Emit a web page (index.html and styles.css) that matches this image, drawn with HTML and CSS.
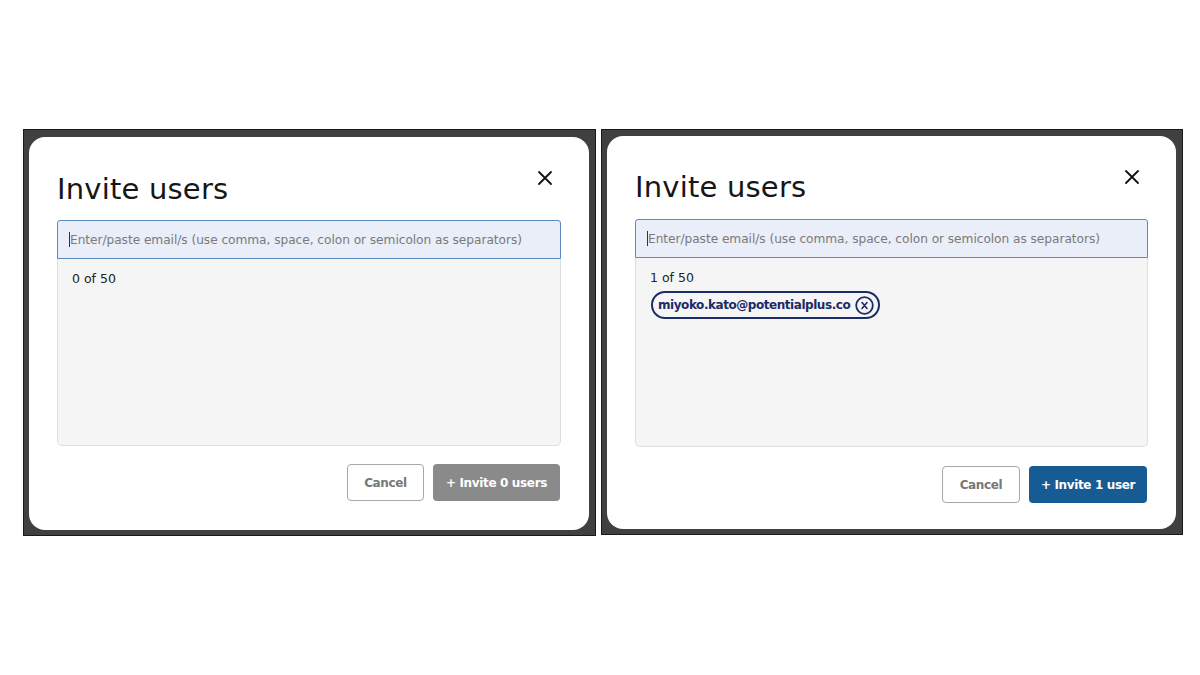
FILE: index.html
```html
<!DOCTYPE html>
<html>
<head>
<meta charset="utf-8">
<link rel="stylesheet" href="styles.css">
</head>
<body>
<div class="stage">
  <div class="frame frame-left">
    <div class="dialog">
      <div class="head">
        <h1 class="title">Invite users</h1>
        <button class="close" aria-label="Close">
          <svg width="16" height="16" viewBox="0 0 16 16"><path d="M2 2L14 14M14 2L2 14" stroke="#111" stroke-width="1.8" stroke-linecap="round"/></svg>
        </button>
      </div>
      <div class="field">
        <div class="input"><span class="caret"></span><span class="ph">Enter/paste email/s (use comma, space, colon or semicolon as separators)</span></div>
        <div class="list">
          <div class="count">0 of 50</div>
        </div>
      </div>
      <div class="actions">
        <button class="btn cancel">Cancel</button>
        <button class="btn invite disabled">+ Invite 0 users</button>
      </div>
    </div>
  </div>
  <div class="frame frame-right">
    <div class="dialog">
      <div class="head">
        <h1 class="title">Invite users</h1>
        <button class="close" aria-label="Close">
          <svg width="16" height="16" viewBox="0 0 16 16"><path d="M2 2L14 14M14 2L2 14" stroke="#111" stroke-width="1.8" stroke-linecap="round"/></svg>
        </button>
      </div>
      <div class="field">
        <div class="input"><span class="caret"></span><span class="ph">Enter/paste email/s (use comma, space, colon or semicolon as separators)</span></div>
        <div class="list">
          <div class="count">1 of 50</div>
          <div class="chips">
            <span class="chip">miyoko.kato@potentialplus.co
              <svg class="chip-x" width="19" height="19" viewBox="0 0 19 19"><circle cx="9.5" cy="9.5" r="8.3" fill="none" stroke="#1c2a66" stroke-width="1.8"/><path d="M7 6.5L12 12.5M12 6.5L7 12.5" stroke="#1c2a66" stroke-width="1.6" stroke-linecap="round"/></svg>
            </span>
          </div>
        </div>
      </div>
      <div class="actions">
        <button class="btn cancel">Cancel</button>
        <button class="btn invite active">+ Invite 1 user</button>
      </div>
    </div>
  </div>
</div>
</body>
</html>
```
FILE: styles.css
```css
* { box-sizing: border-box; }
html, body { margin: 0; padding: 0; background: #fff; }
body {
  font-family: "DejaVu Sans", "Noto Sans", sans-serif;
  width: 1200px;
  height: 675px;
  overflow: hidden;
}
.stage {
  display: flex;
  padding: 129px 0 0 23px;
  gap: 5px;
}
.frame {
  background: #404040;
  border: 1px solid #1a1a1a;
  padding: 7px 6px 5px 5px;
}
.frame-left { width: 573px; height: 407px; }
.frame-right { width: 582px; height: 406px; padding-top: 6px; }
.dialog {
  background: #fff;
  border-radius: 16px;
  height: 100%;
  padding: 0 28px;
  display: flex;
  flex-direction: column;
}
.head {
  display: flex;
  justify-content: space-between;
  align-items: flex-start;
  height: 83px;
}
.title {
  margin: 35px 0 0 0;
  font-size: 29px;
  line-height: 34px;
  font-weight: 400;
  color: #161616;
  letter-spacing: 0.2px;
}
.close {
  border: 0;
  background: none;
  padding: 0;
  margin: 33px 8px 0 0;
  width: 16px;
  height: 16px;
  display: flex;
}
.field { display: flex; flex-direction: column; }
.input {
  height: 39px;
  background: #e9eef8;
  border: 1px solid #5a8ac0;
  border-radius: 3px 3px 0 0;
  display: flex;
  align-items: center;
  padding-left: 11px;
  font-size: 12.2px;
  color: #7a7a7a;
  white-space: nowrap;
  letter-spacing: -0.05px;
}
.caret {
  width: 1px;
  height: 15px;
  background: #333;
}
.list {
  height: 187px;
  background: #f5f5f5;
  border: 1px solid #dedede;
  border-top: 0;
  border-radius: 0 0 5px 5px;
  padding: 12px 14px 10px;
}
.count {
  font-size: 12.5px;
  color: #222;
  line-height: 16px;
}
.chips { margin-top: 5px; display: flex; }
.chip {
  display: inline-flex;
  align-items: center;
  gap: 5px;
  height: 28px;
  padding: 0 4px 0 5px;
  border: 2px solid #1c2a66;
  border-radius: 14px;
  color: #1c2a66;
  font-weight: 700;
  font-size: 12px;
  letter-spacing: -0.45px;
  margin-left: 1px;
}
.chip-x { display: block; }
.actions {
  display: flex;
  justify-content: flex-end;
  gap: 9px;
  margin-top: 18px;
  padding-right: 1px;
}
.btn {
  font-family: inherit;
  font-weight: 700;
  font-size: 12px;
  letter-spacing: -0.35px;
  height: 37px;
  border-radius: 4px;
  cursor: pointer;
  padding: 0;
}
.cancel {
  width: 77px;
  background: #fff;
  border: 1px solid #a8a8a8;
  color: #777;
}
.invite {
  border: 0;
  color: #fff;
}
.invite.disabled { width: 127px; background: #8a8a8a; }
.invite.active { width: 118px; background: #175b94; }
.frame-right .actions { margin-top: 19px; }
.frame-right .cancel { width: 78px; }
.frame-right .title { margin-top: 34px; }
.frame-right .list { height: 189px; }
```
